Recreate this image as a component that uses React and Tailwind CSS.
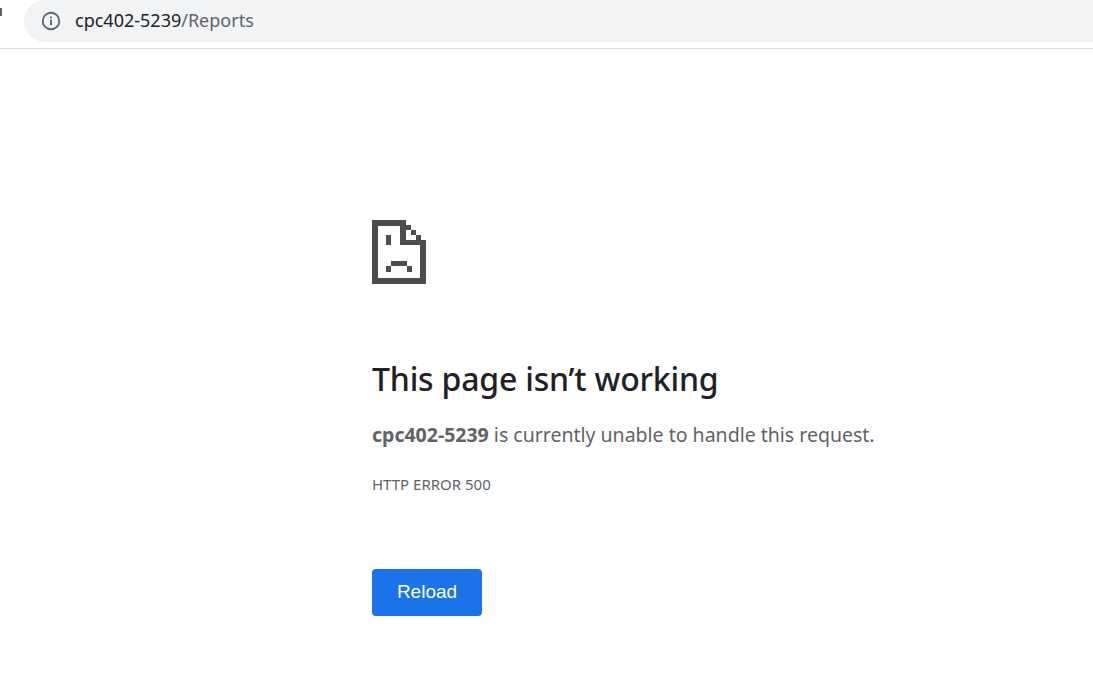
export default function App() {
  return (
    <div className="w-[1093px] h-[692px] bg-white overflow-hidden relative" style={{fontFamily: '"Noto Sans", "Open Sans", sans-serif'}}>
      <div className="h-[49px] border-b border-[#dadce0] flex items-center relative">
        <div className="absolute left-0 top-[8px] w-[2px] h-[8px] bg-[#5f6368]"></div>
        <div className="ml-[24px] h-[42px] -mt-[7px] flex-1 bg-[#f1f3f4] rounded-l-[21px] flex items-center pl-[16px]">
          <svg width="22" height="22" viewBox="0 0 24 24" className="mr-[13px]">
            <circle cx="12" cy="12" r="9" fill="none" stroke="#5f6368" strokeWidth="2"/>
            <rect x="11" y="10.5" width="2" height="6" fill="#5f6368"/>
            <rect x="11" y="7" width="2" height="2" fill="#5f6368"/>
          </svg>
          <span className="text-[18px] text-[#202124]">cpc402-5239<span className="text-[#5f6368]">/Reports</span></span>
        </div>
      </div>
      <div className="pl-[372px] pt-[171px]">
        <svg width="54" height="65" viewBox="12 10 54 65" fill="#4d4d4d">
          <rect x="12" y="10" width="6" height="64"/>
          <rect x="12" y="10" width="34" height="6"/>
          <rect x="12" y="68" width="54" height="6"/>
          <rect x="60" y="30" width="6" height="44"/>
          <rect x="40" y="10" width="6" height="25"/>
          <rect x="40" y="30" width="26" height="5"/>
          <rect x="46" y="15" width="5" height="5"/>
          <rect x="51" y="20" width="5" height="5"/>
          <rect x="56" y="25" width="5" height="5"/>
          <rect x="26" y="25" width="5" height="10"/>
          <rect x="31" y="51" width="16" height="5"/>
          <rect x="26" y="56" width="5" height="6"/>
          <rect x="47" y="56" width="5" height="6"/>
        </svg>
        <h1 className="mt-[74px] text-[32px] leading-[40px] text-[#202124] font-medium tracking-[-0.2px]">This page isn’t working</h1>
        <p className="mt-[22px] text-[19.5px] leading-[28px] text-[#5f6368]"><b className="font-bold">cpc402-5239</b> is currently unable to handle this request.</p>
        <p className="mt-[25px] text-[15px] leading-[20px] text-[#5f6368]">HTTP ERROR 500</p>
        <button className="mt-[75px] w-[110px] h-[47px] bg-[#1a73e8] rounded-[4px] text-white text-[19px]" style={{fontFamily: '"Liberation Sans", Arial, sans-serif'}}>Reload</button>
      </div>
    </div>
  );
}
